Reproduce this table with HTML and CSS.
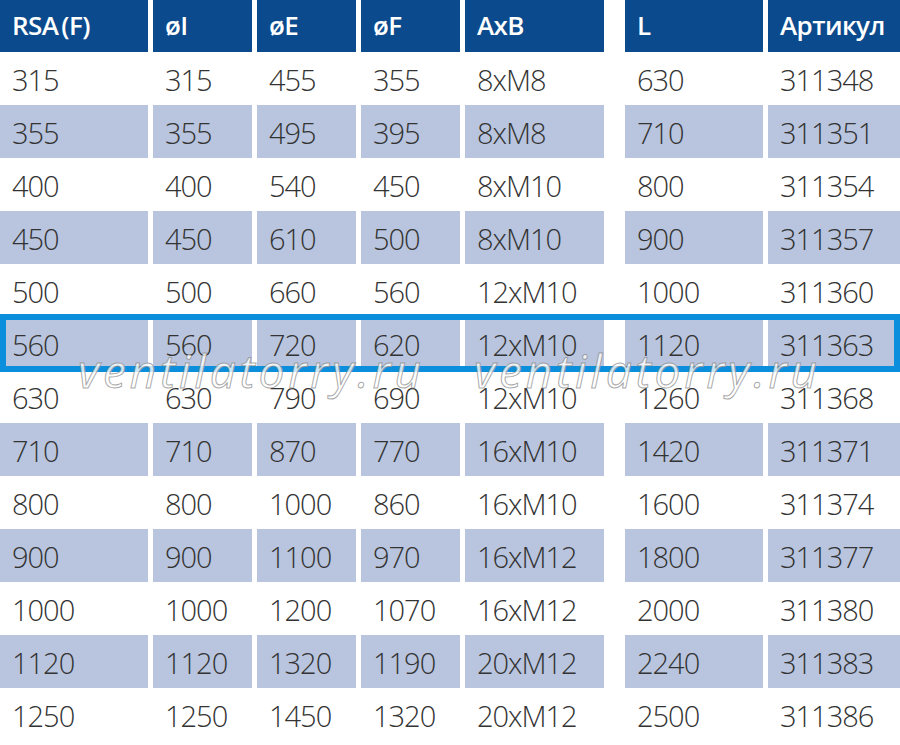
FILE: index.html
```html
<!DOCTYPE html>
<html lang="ru">
<head>
<meta charset="utf-8">
<title>RSA (F)</title>
<link rel="stylesheet" href="styles.css">
</head>
<body>
<div class="sheet">
  <div class="row head">
    <div class="cell c1"><span class="rsa">RSA</span>(F)</div>
    <div class="cell">øI</div>
    <div class="cell">øE</div>
    <div class="cell">øF</div>
    <div class="cell">AxB</div>
    <div class="cell c6">L</div>
    <div class="cell">Артикул</div>
  </div>
  <div class="row"><div class="cell c1">315</div><div class="cell">315</div><div class="cell">455</div><div class="cell">355</div><div class="cell">8xM8</div><div class="cell c6">630</div><div class="cell">311348</div></div>
  <div class="row alt"><div class="cell c1">355</div><div class="cell">355</div><div class="cell">495</div><div class="cell">395</div><div class="cell">8xM8</div><div class="cell c6">710</div><div class="cell">311351</div></div>
  <div class="row"><div class="cell c1">400</div><div class="cell">400</div><div class="cell">540</div><div class="cell">450</div><div class="cell">8xM10</div><div class="cell c6">800</div><div class="cell">311354</div></div>
  <div class="row alt"><div class="cell c1">450</div><div class="cell">450</div><div class="cell">610</div><div class="cell">500</div><div class="cell">8xM10</div><div class="cell c6">900</div><div class="cell">311357</div></div>
  <div class="row"><div class="cell c1">500</div><div class="cell">500</div><div class="cell">660</div><div class="cell">560</div><div class="cell">12xM10</div><div class="cell c6">1000</div><div class="cell">311360</div></div>
  <div class="row alt selected"><div class="cell c1">560</div><div class="cell">560</div><div class="cell">720</div><div class="cell">620</div><div class="cell">12xM10</div><div class="cell c6">1120</div><div class="cell">311363</div></div>
  <div class="row"><div class="cell c1">630</div><div class="cell">630</div><div class="cell">790</div><div class="cell">690</div><div class="cell">12xM10</div><div class="cell c6">1260</div><div class="cell">311368</div></div>
  <div class="row alt"><div class="cell c1">710</div><div class="cell">710</div><div class="cell">870</div><div class="cell">770</div><div class="cell">16xM10</div><div class="cell c6">1420</div><div class="cell">311371</div></div>
  <div class="row"><div class="cell c1">800</div><div class="cell">800</div><div class="cell">1000</div><div class="cell">860</div><div class="cell">16xM10</div><div class="cell c6">1600</div><div class="cell">311374</div></div>
  <div class="row alt"><div class="cell c1">900</div><div class="cell">900</div><div class="cell">1100</div><div class="cell">970</div><div class="cell">16xM12</div><div class="cell c6">1800</div><div class="cell">311377</div></div>
  <div class="row"><div class="cell c1">1000</div><div class="cell">1000</div><div class="cell">1200</div><div class="cell">1070</div><div class="cell">16xM12</div><div class="cell c6">2000</div><div class="cell">311380</div></div>
  <div class="row alt"><div class="cell c1">1120</div><div class="cell">1120</div><div class="cell">1320</div><div class="cell">1190</div><div class="cell">20xM12</div><div class="cell c6">2240</div><div class="cell">311383</div></div>
  <div class="row"><div class="cell c1">1250</div><div class="cell">1250</div><div class="cell">1450</div><div class="cell">1320</div><div class="cell">20xM12</div><div class="cell c6">2500</div><div class="cell">311386</div></div>

  <div class="watermark wm1">ventilatorry.ru</div>
  <div class="watermark wm2">ventilatorry.ru</div>
</div>
</body>
</html>
```

FILE: styles.css
```css
html, body {
  margin: 0;
  padding: 0;
  background: #ffffff;
}

.sheet {
  position: relative;
  width: 900px;
  height: 745px;
  overflow: hidden;
  font-family: "Open Sans", "Noto Sans", "Liberation Sans", sans-serif;
}

.row {
  display: flex;
  gap: 5px;
  height: 53px;
}

.row.head {
  height: 52px;
}

.cell {
  box-sizing: border-box;
  width: 99px;
  flex: none;
  display: flex;
  align-items: center;
  padding-left: 12px;
  padding-top: 1px;
  font-size: 29px;
  font-weight: 300;
  letter-spacing: -1px;
  color: #333333;
  white-space: nowrap;
}

.cell.c1 { width: 148px; }
.cell:nth-child(5) { width: 139px; }
.cell.c6 { width: 138px; margin-left: 16px; }
.cell:nth-child(7) { width: 132px; }

.head .cell {
  background: #0b4a8d;
  color: #ffffff;
  font-size: 26px;
  font-weight: 600;
  letter-spacing: -0.6px;
  padding-left: 12px;
  padding-top: 0;
  padding-bottom: 2px;
}

.head .rsa {
  margin-right: 3px;
}

.alt .cell {
  background: #b9c5de;
}

.selected {
  position: relative;
}

.selected::after {
  content: "";
  position: absolute;
  top: -3px;
  bottom: -2px;
  left: 0;
  right: 0;
  border: 6px solid #0b8fdd;
  pointer-events: none;
}

.watermark {
  position: absolute;
  top: 345px;
  font-family: "Open Sans", "Noto Sans", sans-serif;
  font-style: italic;
  font-weight: 400;
  font-size: 46px;
  letter-spacing: 3.8px;
  line-height: 50px;
  color: rgba(255, 255, 255, 0.8);
  -webkit-text-stroke: 1px rgba(130, 130, 130, 0.7);
  white-space: nowrap;
  pointer-events: none;
}

.wm1 { left: 78px; }
.wm2 { left: 474px; }
```
